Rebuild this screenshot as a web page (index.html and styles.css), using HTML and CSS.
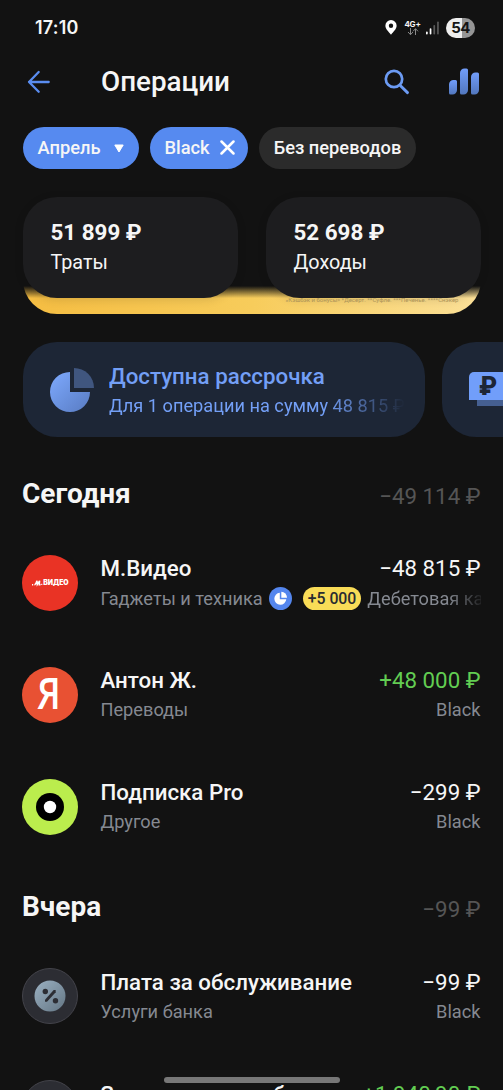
FILE: index.html
```html
<!DOCTYPE html>
<html lang="ru">
<head>
<meta charset="utf-8">
<meta name="viewport" content="width=device-width, initial-scale=1">
<title>Операции</title>
<link rel="stylesheet" href="styles.css">
</head>
<body>
<div class="screen">
  <div class="status">
    <span class="clock">17:10</span>
    <div class="status-icons">
      <svg class="pin" width="12" height="15" viewBox="0 0 12 15"><path fill="#fff" fill-rule="evenodd" d="M6 0a5.600 5.600 0 0 1 5.600 5.700C11.600 9 8.500 11.500 6 14.700 3.500 11.500.4 9 .4 5.700A5.600 5.600 0 0 1 6 0Zm0 3.600a2.200 2.200 0 1 0 0 4.400 2.200 2.200 0 0 0 0-4.400Z"/></svg>
      <div class="network">
        <span>4G+</span>
        <svg width="12" height="8" viewBox="0 0 12 8" fill="none" stroke="#8a8a8a" stroke-width="1"><path d="M3.500 0v6.500M1 4l2.500 2.700L6 4M8.500 7V.8M6 3.300 8.500.7 11 3.300"/></svg>
      </div>
      <svg class="signal" width="13" height="14" viewBox="0 0 13 14"><rect y="10.500" width="1.700" height="3" rx=".8" fill="#fff"/><rect x="3.700" y="7.300" width="1.700" height="6.200" rx=".8" fill="#fff"/><rect x="7.400" y="4" width="1.700" height="9.500" rx=".8" fill="#5a5a5a"/><rect x="11.100" y=".5" width="1.700" height="13" rx=".8" fill="#5a5a5a"/></svg>
      <span class="battery">54</span>
    </div>
  </div>

  <header class="header">
    <svg class="back" width="24" height="24" viewBox="0 0 24 24" fill="none" stroke="#5a8df0" stroke-width="2.300" stroke-linecap="round" stroke-linejoin="round"><path d="M11.700 2 2 12l9.700 9.700M2 12h19.700"/></svg>
    <h1>Операции</h1>
    <svg class="search" width="26" height="26" viewBox="0 0 26 26" fill="none" stroke="#6c9bf3" stroke-width="2.700" stroke-linecap="round"><circle cx="10" cy="10" r="8.200"/><path d="m16.500 16.800 7 6.800" stroke-width="2.900"/></svg>
    <svg class="bars" width="30" height="27" viewBox="0 0 30 27">
      <defs><linearGradient id="bar" x1="0" y1="0" x2="0" y2="1"><stop stop-color="#719dfa"/><stop offset="1" stop-color="#5277bd"/></linearGradient></defs>
      <path fill="url(#bar)" d="M0 16.500a4.500 4.500 0 0 1 4.500-4.500H6.500A1.500 1.500 0 0 1 8 13.500V22a4.500 4.500 0 0 1-4.500 4.500H1.500A1.500 1.500 0 0 1 0 25Z"/>
      <path fill="url(#bar)" d="M11 5a4.500 4.500 0 0 1 4.500-4.500H17.500A1.500 1.500 0 0 1 19 2V22a4.500 4.500 0 0 1-4.500 4.500H12.500A1.500 1.500 0 0 1 11 25Z"/>
      <path fill="url(#bar)" d="M22 9a4.500 4.500 0 0 1 4.500-4.500H28.500A1.500 1.500 0 0 1 30 6V22a4.500 4.500 0 0 1-4.500 4.500H23.500A1.500 1.500 0 0 1 22 25Z"/>
    </svg>
  </header>

  <div class="chips">
    <div class="chip active"><span>Апрель</span><svg class="caret" width="10" height="9" viewBox="0 0 10 9"><path fill="#fff" stroke="#fff" stroke-linejoin="round" d="M.8 1h8.400L5 8Z"/></svg></div>
    <div class="chip active black"><span>Black</span><svg class="close" width="15" height="15" viewBox="0 0 15 15" fill="none" stroke="#fff" stroke-width="2.500" stroke-linecap="round"><path d="m1.500 1.500 12 12m0-12-12 12"/></svg></div>
    <div class="chip">Без переводов</div>
  </div>

  <section class="summary">
    <div class="banner"><p class="legal">«Кэшбэк и бонусы» *Десерт. **Суфле. ***Печенье. ****Снэкер</p></div>
    <div class="total"><strong>51 899 ₽</strong><span>Траты</span></div>
    <div class="total"><strong>52 698 ₽</strong><span>Доходы</span></div>
  </section>

  <section class="promos">
    <div class="promo">
      <svg class="pie" width="44" height="44" viewBox="0 0 44 44">
        <defs><linearGradient id="pie" x1="0" y1="0" x2="1" y2="1"><stop stop-color="#7eaaff"/><stop offset="1" stop-color="#587bc2"/></linearGradient></defs>
        <path fill="url(#pie)" d="M20 4v20h20A20 20 0 1 1 20 4Z"/><path fill="#40567f" d="M24 0a20 20 0 0 1 20 20H24Z"/>
      </svg>
      <div class="promo-text"><strong>Доступна рассрочка</strong><span>Для 1 операции на сумму 48 815 ₽</span></div>
    </div>
    <div class="promo next">
      <svg width="46" height="36" viewBox="0 0 46 36"><path fill="#455f91" d="M8 28h38v6H8z"/><rect width="46" height="28" rx="5" fill="#719efa"/><path fill="#719efa" d="M0 20h10v8H0z"/><text x="10" y="22.500" class="note-sign">₽</text></svg>
    </div>
  </section>

  <div class="day"><h2>Сегодня</h2><span>−49 114 ₽</span></div>
  <ul class="list">
    <li class="row">
      <div class="avatar video"><svg width="37" height="8" viewBox="0 0 37 8"><path d="M0 5.800h1.200M2.500 6Q3.800 5.500 5 1.800L5.300 5.500 7.600 1.800 7.300 5.800H8.500" fill="none" stroke="#fff" stroke-width="1.500"/><text x="8.600" y="6.300" textLength="28" lengthAdjust="spacingAndGlyphs" class="video-mark">.ВИДЕО</text></svg></div>
      <div class="info">
        <div class="line"><b>М.Видео</b><span class="sum">−48 815 ₽</span></div>
        <div class="line sub"><span>Гаджеты и техника</span>
          <svg class="split" width="23" height="23" viewBox="0 0 23 23"><circle cx="11.500" cy="11.500" r="11.500" fill="#5486ee"/><path fill="#fff" d="M10.800 5.700v6.500h6.500a6 6 0 1 1-6.500-6.500Z"/><path fill="#fff" d="M12.300 4.700a6 6 0 0 1 5.700 6h-5.700Z"/></svg>
          <span class="bonus">+5 000</span><span class="account fade">Дебетовая карта</span></div>
      </div>
    </li>
    <li class="row">
      <div class="avatar yandex"><span>Я</span></div>
      <div class="info"><div class="line"><b>Антон Ж.</b><span class="sum income">+48 000 ₽</span></div><div class="line sub"><span>Переводы</span><span class="account">Black</span></div></div>
    </li>
    <li class="row">
      <div class="avatar pro"><svg width="56" height="56" viewBox="0 0 56 56"><circle cx="28" cy="28" r="14" fill="#000"/><circle cx="28" cy="28" r="6.200" fill="#fff"/></svg></div>
      <div class="info"><div class="line"><b>Подписка Pro</b><span class="sum">−299 ₽</span></div><div class="line sub"><span>Другое</span><span class="account">Black</span></div></div>
    </li>
  </ul>

  <div class="day later"><h2>Вчера</h2><span>−99 ₽</span></div>
  <ul class="list">
    <li class="row">
      <div class="avatar bank"><svg width="32" height="32" viewBox="0 0 32 32"><defs><linearGradient id="fee" x1="0" y1="0" x2="1" y2="1"><stop stop-color="#9bb1c2"/><stop offset="1" stop-color="#647684"/></linearGradient></defs><circle cx="16" cy="16" r="15.500" fill="url(#fee)"/><circle cx="11.300" cy="11.500" r="2.700" fill="#2c2d33"/><circle cx="21.500" cy="20.700" r="2.700" fill="#2c2d33"/><path d="M21.700 10v2.200L13 21.800h-2v-2L19.700 10Z" fill="#2c2d33"/></svg></div>
      <div class="info"><div class="line"><b>Плата за обслуживание</b><span class="sum">−99 ₽</span></div><div class="line sub"><span>Услуги банка</span><span class="account">Black</span></div></div>
    </li>
    <li class="row">
      <div class="avatar bank"></div>
      <div class="info"><div class="line"><b>Зачисление кэшбэка</b><span class="sum income">+1 940,90 ₽</span></div></div>
    </li>
  </ul>
  <div class="home-indicator"></div>
</div>
</body>
</html>
```
FILE: styles.css
```css
* { box-sizing: border-box; }
body { margin: 0; background: #121212; color: #f6f6f6; font-family: Roboto, "Noto Sans", sans-serif; }
h1, h2, p, ul { margin: 0; padding: 0; }
.screen { position: relative; width: 503px; height: 1090px; overflow: hidden; background: #121212; white-space: nowrap; }

.status { height: 55px; padding: 0 28px 0 35px; display: flex; align-items: center; justify-content: space-between; }
.clock { font: 600 18px/20px Inter, Roboto, sans-serif; letter-spacing: .2px; }
.status-icons { display: flex; align-items: center; }
.pin { margin-right: 7px; }
.network { width: 17px; display: flex; flex-direction: column; align-items: center; margin-right: 5px; }
.network span { font: 700 8px/8px Inter, sans-serif; letter-spacing: -.2px; }
.signal { margin-right: 7px; }
.battery { width: 29px; height: 20px; border-radius: 10px; background: linear-gradient(90deg, #eee 54%, #959595 54%); color: #151515; font: 700 15px/20px Inter, sans-serif; text-align: center; letter-spacing: -.6px; }

.header { height: 72px; padding: 0 24px 19px 27px; display: flex; align-items: center; }
.header h1 { flex: 1; margin-left: 50px; font-size: 27.800px; line-height: 34px; font-weight: 500; }
.search { margin-right: 39px; }

.chips { display: flex; gap: 11px; padding-left: 22.500px; }
.chip { height: 41.500px; padding: 0 15px; display: flex; align-items: center; border-radius: 21px; background: #2b2b2b; font-size: 18.300px; line-height: 24px; font-weight: 500; }
.chip.active { background: #568af0; }
.caret { margin-left: 13px; margin-top: 2px; }
.chip.black { padding-right: 13px; }
.close { margin-left: 10px; }

.summary { position: relative; display: flex; gap: 28px; margin: 28px 22.500px 0; height: 117.500px; }
.total { position: relative; flex: 1; height: 101.500px; padding: 22px 28px; display: flex; flex-direction: column; border-radius: 34px; background: #1d1d1f; box-shadow: 0 2px 10px rgba(0, 0, 0, .12); }
.total strong { font-size: 22.400px; line-height: 26px; font-weight: 700; }
.total span { margin-top: 5px; font-size: 19.800px; line-height: 26px; }
.banner { position: absolute; inset: 0; border-radius: 34px; overflow: hidden; background: linear-gradient(180deg, #121212 89px, rgba(18, 18, 18, 0) 101px), linear-gradient(90deg, #f5bd42, #f7cc5b 50%, #fbe098); }
.legal { position: absolute; right: 22px; bottom: 10px; font-size: 6px; line-height: 8px; color: #b69b5d; }

.promos { display: flex; gap: 17px; margin: 28px 0 0 22.500px; }
.promo { flex: none; width: 402.500px; height: 95px; padding: 0 20px 0 27.500px; display: flex; align-items: center; border-radius: 34px; background: #1d2636; color: #739ff6; }
.promo-text { margin-left: 15px; display: flex; flex-direction: column; overflow: hidden; }
.promo-text strong { font-size: 22.300px; line-height: 28px; font-weight: 500; }
.promo-text span { margin-top: 4px; font-size: 18.200px; line-height: 24px; -webkit-mask-image: linear-gradient(90deg, #000 73%, transparent); mask-image: linear-gradient(90deg, #000 73%, transparent); }
.promo.next { padding-left: 27px; }
.note-sign { font: 900 25px Roboto, sans-serif; fill: #1d2636; }

.day { display: flex; justify-content: space-between; align-items: center; padding: 0 22.500px 0 22px; margin-top: 38px; height: 38px; }
.day.later { margin-top: 15px; }
.day h2 { font-size: 28px; line-height: 34px; font-weight: 700; }
.day span { padding-top: 4px; font-size: 22.300px; color: #555; }
.list { list-style: none; padding: 25px 22.500px 0 22px; }
.row { display: flex; height: 111.800px; padding-top: 17px; }
.avatar { flex: none; width: 56px; height: 56px; border-radius: 50%; display: flex; align-items: center; justify-content: center; }
.avatar.video { background: #e93325; }
.video-mark { font: 900 7px Inter, sans-serif; fill: #fff; }
.avatar.yandex { background: #e85133; font: 600 43px/56px "Open Sans", sans-serif; color: #fff; }
.avatar.yandex span { transform: translate(-1px, -2px) scaleX(.84); }
.avatar.pro { background: #bbed4d; }
.avatar.bank { background: #2c2d33; border: 1px solid #43434a; }
.info { flex: 1; min-width: 0; margin: -.6px 0 0 22.500px; }
.line { display: flex; justify-content: space-between; font-size: 22.300px; line-height: 28px; }
.line b { font-weight: 500; }
.income { color: #62cd52; }
.sub { align-items: center; margin-top: 4.200px; font-size: 18.200px; line-height: 24px; color: #858991; }
.split { flex: none; margin-left: 6px; }
.bonus { height: 23px; padding: 0 5px; margin-left: 11px; border-radius: 12px; background: #f9dc57; color: #292b30; font-size: 15.800px; line-height: 23px; font-weight: 500; }
.fade { flex: 1; min-width: 0; margin-left: 6px; overflow: hidden; -webkit-mask-image: linear-gradient(90deg, #000 70%, transparent 105%); mask-image: linear-gradient(90deg, #000 70%, transparent 105%); }
.home-indicator { position: absolute; left: 164px; bottom: 7px; width: 176px; height: 6px; border-radius: 3px; background: #777; }
```
